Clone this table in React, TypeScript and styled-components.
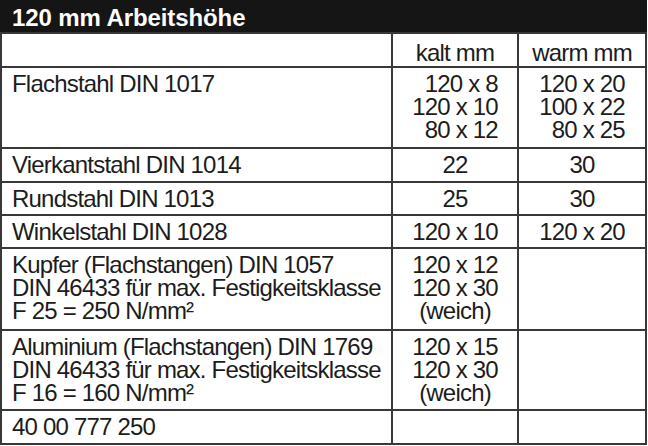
import React from "react";
import styled, { createGlobalStyle } from "styled-components";

const GlobalStyle = createGlobalStyle`
  html, body {
    margin: 0;
    padding: 0;
    background: #ffffff;
  }
  body {
    font-family: "Liberation Sans", Arial, sans-serif;
  }
`;

const Table = styled.div`
  display: grid;
  grid-template-columns: 389px 124px 126px;
  grid-template-rows: 32px 32px 79px 32px 31px 31px 80px 78px 32px;
  gap: 2px;
  width: fit-content;
  padding: 0 2px 2px;
  background: #383838;
  color: #1c1c1c;
`;

const Title = styled.div`
  grid-column: 1 / -1;
  margin: 0 -2px;
  padding: 4px 12px 0;
  background: #151515;
  color: #ffffff;
  font-weight: bold;
  font-size: 24px;
  line-height: 28px;
  letter-spacing: -0.1px;
`;

const Cell = styled.div<{ $center?: boolean; $head?: boolean }>`
  background: #ffffff;
  padding: ${({ $head }) => ($head ? "7px" : "4px")} 10px 0;
  font-size: 24px;
  line-height: 23px;
  letter-spacing: -0.8px;
  text-align: ${({ $center }) => ($center ? "center" : "left")};
  white-space: nowrap;
`;

const Lines = styled.div<{ $align: "left" | "right" | "center" }>`
  display: inline-block;
  text-align: ${({ $align }) => $align};
`;

type Row = {
  label: string[];
  kalt: string[];
  warm: string[];
  align: "right" | "center";
};

const rows: Row[] = [
  {
    label: ["Flachstahl DIN 1017"],
    kalt: ["120 x 8", "120 x 10", "80 x 12"],
    warm: ["120 x 20", "100 x 22", "80 x 25"],
    align: "right",
  },
  { label: ["Vierkantstahl DIN 1014"], kalt: ["22"], warm: ["30"], align: "center" },
  { label: ["Rundstahl DIN 1013"], kalt: ["25"], warm: ["30"], align: "center" },
  { label: ["Winkelstahl DIN 1028"], kalt: ["120 x 10"], warm: ["120 x 20"], align: "center" },
  {
    label: [
      "Kupfer (Flachstangen) DIN 1057",
      "DIN 46433 für max. Festigkeitsklasse",
      "F 25 = 250 N/mm²",
    ],
    kalt: ["120 x 12", "120 x 30", "(weich)"],
    warm: [],
    align: "center",
  },
  {
    label: [
      "Aluminium (Flachstangen) DIN 1769",
      "DIN 46433 für max. Festigkeitsklasse",
      "F 16 = 160 N/mm²",
    ],
    kalt: ["120 x 15", "120 x 30", "(weich)"],
    warm: [],
    align: "center",
  },
  { label: ["40 00 777 250"], kalt: [], warm: [], align: "center" },
];

const Stack = ({ lines, align }: { lines: string[]; align: "left" | "right" | "center" }) => (
  <Lines $align={align}>
    {lines.map((line, i) => (
      <div key={i}>{line}</div>
    ))}
  </Lines>
);

export default function App() {
  return (
    <>
      <GlobalStyle />
      <Table>
        <Title>120 mm Arbeitshöhe</Title>
        <Cell $head />
        <Cell $head $center>kalt mm</Cell>
        <Cell $head $center>warm mm</Cell>
        {rows.map((row, i) => (
          <React.Fragment key={i}>
            <Cell>
              <Stack lines={row.label} align="left" />
            </Cell>
            <Cell $center>
              <Stack lines={row.kalt} align={row.align} />
            </Cell>
            <Cell $center>
              <Stack lines={row.warm} align={row.align} />
            </Cell>
          </React.Fragment>
        ))}
      </Table>
    </>
  );
}
